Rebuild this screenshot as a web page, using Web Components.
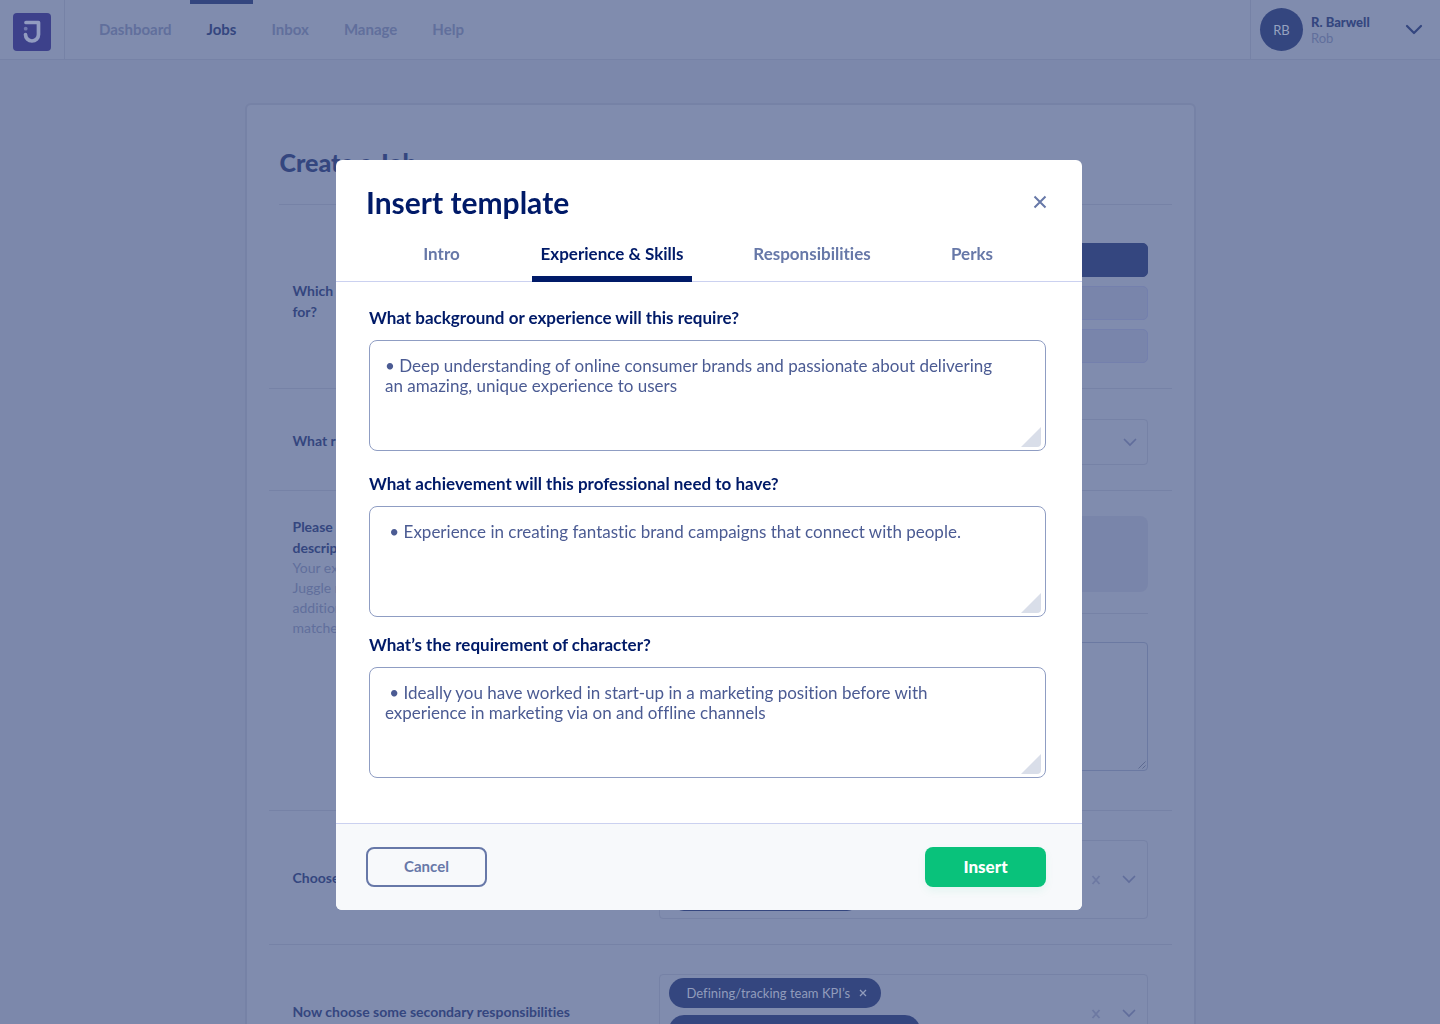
<!DOCTYPE html>
<html lang="en">
<head>
<meta charset="utf-8">
<title>Create a Job</title>
<style>
:root{--font:Lato,"Liberation Sans",sans-serif;--surface:#808cae;--page:#7c88ab;--line:#7682a6;--ink:#34467f;--soft:#616f9c;--navy:#001a68;--slate:#6778a8}
html,body{margin:0;height:100%}
body{font-family:var(--font);font-variant-ligatures:no-common-ligatures;background:var(--page);color:var(--ink);overflow:hidden}
</style>
</head>
<body>
<job-app></job-app>
<script>
const define = (name, html, setup) => {
  const t = document.createElement('template');
  t.innerHTML = '<style>*{box-sizing:border-box}button,textarea,select{font:inherit;font-variant-ligatures:inherit;color:inherit}</style>' + html;
  customElements.define(name, class extends HTMLElement {
    constructor() {
      super();
      this.attachShadow({mode: 'open'}).append(t.content.cloneNode(true));
    }
    connectedCallback() { if (setup) setup(this, this.shadowRoot); }
  });
};

define('nav-link', `
<style>
:host{display:flex}
a{display:flex;align-items:center;padding:0 17px;font-size:15px;font-weight:700;line-height:20px;color:var(--soft);text-decoration:none;border-top:4px solid transparent;padding-bottom:6px}
:host([active]) a{color:var(--ink);border-top-color:var(--ink)}
</style><a href="#"><slot></slot></a>`);

define('app-header', `
<style>
:host{display:flex;height:60px;background:var(--surface);border-bottom:1px solid var(--line)}
.logo{width:65px;padding:13px 13px 0;border-right:1px solid var(--line)}
.logo svg{display:block}
nav{display:flex;flex:1;gap:1px;padding-left:17px}
.user{display:flex;align-items:center;width:190px;padding:0 17px 0 9px;border:0;border-left:1px solid var(--line);background:none;text-align:left}
.avatar{display:grid;place-items:center;width:43px;height:43px;border-radius:50%;background:var(--ink);color:#97a2c0;font-size:13px}
.who{display:flex;flex-direction:column;flex:1;padding-left:8px;font-size:13px;line-height:16px;color:var(--soft)}
.who b{font-weight:900;color:var(--ink)}
</style>
<a class="logo" href="#" aria-label="Home"><svg width="38" height="38" viewBox="0 0 38 38"><rect width="38" height="38" rx="4" fill="#3d418b"/><path d="M13 9.500h12.500v12a6.500 6.500 0 0 1-13 0" fill="none" stroke="#929cc0" stroke-width="3.700" stroke-linecap="round" stroke-linejoin="round"/><circle cx="12.700" cy="15.700" r="1.900" fill="#7078ad"/></svg></a>
<nav><slot></slot></nav>
<button class="user" type="button"><span class="avatar">RB</span><span class="who"><b>R. Barwell</b><span>Rob</span></span><svg width="18" height="12" viewBox="0 0 18 12" fill="none" stroke="#34467f" stroke-width="2.200" stroke-linecap="round" stroke-linejoin="round"><path d="M2 2l7 7 7-7"/></svg></button>`);

define('form-row', `
<style>
:host{display:flex;align-items:center;gap:24px;padding:30px 24px 25px;border-bottom:1px solid var(--line);font-size:14px;line-height:21px}
:host([lead]){padding-top:38px}
:host([tags]){padding-top:29px}
:host([top]){align-items:flex-start;padding-top:25px;padding-bottom:39px}
.label{flex:1;padding-bottom:4px;font-weight:700}
.field{width:489px}
</style><div class="label"><slot name="label"></slot></div><div class="field"><slot></slot></div>`);

define('tag-chip', `
<style>
:host{display:flex;align-items:center;gap:9px;width:fit-content;height:30px;padding:0 14px 0 18px;border-radius:15px;background:var(--ink);color:#919cbc;font-size:13px;line-height:14px}
button{display:flex;padding:0;border:0;background:none}
</style><span><slot></slot></span><button type="button" aria-label="Remove"><svg width="8" height="8" viewBox="0 0 8 8" stroke="currentColor" stroke-width="1.300"><path d="M1 1l6 6M7 1L1 7"/></svg></button>`);

define('tag-select', `
<style>
:host{display:flex;align-items:center;gap:21px;height:79px;padding:0 11px 0 9px;border:1px solid var(--line);border-radius:4px}
.tags{display:flex;flex-direction:column;align-self:flex-start;flex:1;gap:7px;padding-top:3px}
button{display:flex;padding:0;border:0;background:none}
</style><div class="tags"><slot></slot></div>
<button type="button" aria-label="Clear"><svg width="10" height="10" viewBox="0 0 10 10" stroke="#6d79a2" stroke-width="1.800"><path d="M1.500 1l7 8M8.500 1l-7 8"/></svg></button>
<button type="button" aria-label="Open list"><svg width="14" height="9" viewBox="0 0 14 9" fill="none" stroke="#606d9b" stroke-width="1.700" stroke-linecap="round"><path d="M1.500 1.500L7 7l5.500-5.500"/></svg></button>`);

define('job-form', `
<style>
:host{display:block;width:min(951px,92vw);margin:43px auto 0;padding:41px 22px 0;background:var(--surface);border:2px solid var(--line);border-radius:6px;box-sizing:border-box}
h1{margin:0 0 0 10px;padding:0 0 26px 1px;font-size:25px;line-height:32px;font-weight:900;border-bottom:1px solid var(--line)}
.choices{display:grid;gap:9px}
.choices button{height:34px;border:1px solid #7480ad;border-radius:5px;background:#7985ab;color:var(--soft)}
.choices .on{background:var(--ink);border-color:var(--ink);color:#919cbc}
.select{display:grid;align-items:center}
.select>*{grid-area:1/1}
.select svg{justify-self:end;margin-right:11px;pointer-events:none}
select{appearance:none;width:100%;height:46px;padding:0 16px;border:1px solid var(--line);border-radius:4px;background:none}
p{margin:0;font-weight:400;color:var(--soft);line-height:20px}
.hint{height:76px;border-radius:8px;background:#7985aa}
hr{margin:21px 0 28px;border:0;border-top:1px solid var(--line)}
textarea{display:block;width:100%;height:129px;resize:none;border:1px solid #6b79a2;border-radius:4px;background:none}
.write{display:grid}
.write>*{grid-area:1/1}
.write svg{place-self:end;margin:0 2px 2px 0}
</style>
<h1>Create a Job</h1>
<form-row lead><span slot="label">Which role is this<br>for?</span><div class="choices"><button class="on" type="button" aria-label="First option"></button><button type="button" aria-label="Second option"></button><button type="button" aria-label="Third option"></button></div></form-row>
<form-row><label slot="label" for="role">What role?</label><div class="select"><select id="role"><option></option></select><svg width="14" height="9" viewBox="0 0 14 9" fill="none" stroke="#606d9b" stroke-width="1.700" stroke-linecap="round"><path d="M1.500 1.500L7 7l5.500-5.500"/></svg></div></form-row>
<form-row top><div slot="label"><label for="desc">Please add a<br>description</label><p>Your expert at<br>Juggle may add<br>additional<br>matches</p></div><div><div class="hint"></div><hr><div class="write"><textarea id="desc"></textarea><svg width="8" height="8" viewBox="0 0 8 8" stroke="#5d6a91"><path d="M.5 7.500l7-7M4.500 7.500l3-3"/></svg></div></div></form-row>
<form-row tags><span slot="label">Choose skills</span><tag-select><tag-chip>Marketing</tag-chip><tag-chip>Managing social channels</tag-chip></tag-select></form-row>
<form-row tags><span slot="label">Now choose some secondary responsibilities</span><tag-select><tag-chip>Defining/tracking team KPI’s</tag-chip><tag-chip>Managing all the marketing budgets</tag-chip></tag-select></form-row>`);

define('template-field', `
<style>
:host{display:grid;gap:12px}
label{font-size:17px;line-height:20px;font-weight:700;color:var(--navy)}
.box{display:grid}
.box>*{grid-area:1/1}
textarea{display:block;width:100%;height:111px;margin:0;padding:15px;resize:none;border:1px solid #8f9dc3;border-radius:8px;background:#fff;color:#4b5b93;font-size:17px;line-height:20px;outline:0}
svg{place-self:end;margin:0 5px 4px 0;pointer-events:none}
</style>
<label for="t"></label><div class="box"><textarea id="t"></textarea><svg width="20" height="20" viewBox="0 0 20 20"><path d="M20 0v16a4 4 0 0 1-4 4H0z" fill="#d9dee9"/></svg></div>`,
(host, root) => {
  root.querySelector('label').textContent = host.getAttribute('label');
  root.querySelector('textarea').value = host.getAttribute('value');
});

define('modal-tabs', `
<style>
:host{display:grid;grid-template-columns:181fr 160fr 240fr 80fr;padding:0 70px 0 15px;border-bottom:1px solid #cbd1f0}
button{height:53px;margin-bottom:-1px;padding:2px 0 0;border:0;border-bottom:6px solid transparent;background:none;font-size:17px;line-height:20px;font-weight:700;color:var(--slate);white-space:nowrap}
[aria-selected=true]{color:var(--navy);border-color:var(--navy)}
</style>
<button role="tab" aria-selected="false">Intro</button><button role="tab" aria-selected="true">Experience &amp; Skills</button><button role="tab" aria-selected="false">Responsibilities</button><button role="tab" aria-selected="false">Perks</button>`);

define('template-modal', `
<style>
:host{display:flex;flex-direction:column;width:min(746px,96vw);border-radius:6px;background:#fff;overflow:hidden}
header{display:flex;align-items:center;justify-content:space-between;padding:22px 35px 7px 30px}
h2{margin:0;font-size:30px;line-height:40px;font-weight:700;color:var(--navy)}
.close{display:flex;padding:0;border:0;background:none}
.body{display:grid;gap:18px;padding:26px 36px 45px 33px}
.wide{margin-bottom:5px}
footer{display:flex;justify-content:space-between;padding:23px 36px 23px 30px;background:#f7f9fb;border-top:1px solid #cbd1f0}
footer button{width:121px;height:40px;padding:0 0 2px;border-radius:8px;font-weight:700}
.cancel{border:2px solid var(--slate);background:none;color:var(--slate);font-size:15px}
.insert{border:0;background:#09c27b;color:#fff;font-size:17px;font-weight:900;box-shadow:0 4px 8px #09c27b14}
</style>
<header><h2>Insert template</h2><button class="close" type="button" aria-label="Close"><svg width="14" height="14" viewBox="0 0 14 14" stroke="#6778a8" stroke-width="2"><path d="M1.500 1.500l11 11M12.500 1.500l-11 11"/></svg></button></header>
<modal-tabs role="tablist"></modal-tabs>
<div class="body">
<template-field class="wide" label="What background or experience will this require?" value="• Deep understanding of online consumer brands and passionate about delivering&#10;an amazing, unique experience to users"></template-field>
<template-field label="What achievement will this professional need to have?" value=" • Experience in creating fantastic brand campaigns that connect with people."></template-field>
<template-field label="What’s the requirement of character?" value=" • Ideally you have worked in start-up in a marketing position before with&#10;experience in marketing via on and offline channels"></template-field>
</div>
<footer><button class="cancel" type="button">Cancel</button><button class="insert" type="button">Insert</button></footer>`);

define('job-app', `
<style>
:host{display:block;height:100vh;overflow:hidden}
.layer{position:fixed;inset:0;display:flex;justify-content:center;align-items:flex-start;padding:160px 22px 0 0}
</style>
<app-header><nav-link>Dashboard</nav-link><nav-link active>Jobs</nav-link><nav-link>Inbox</nav-link><nav-link>Manage</nav-link><nav-link>Help</nav-link></app-header>
<job-form></job-form>
<div class="layer"><template-modal role="dialog" aria-label="Insert template"></template-modal></div>`);
</script>
</body>
</html>
